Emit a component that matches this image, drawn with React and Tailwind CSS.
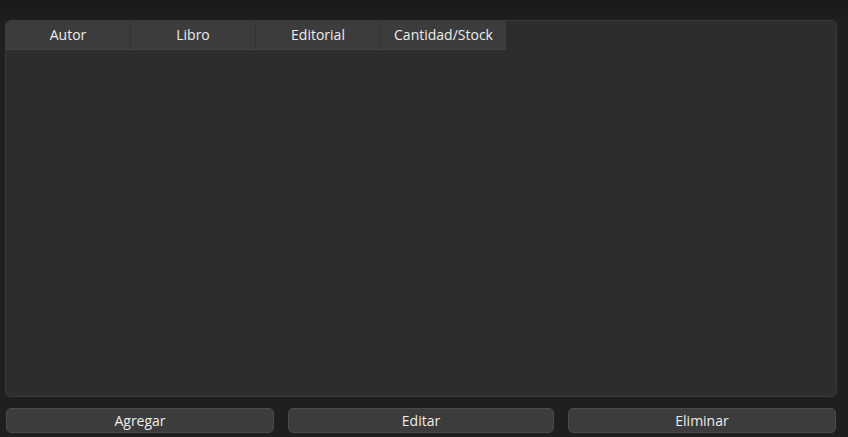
import React from 'react';

const columns = ['Autor', 'Libro', 'Editorial', 'Cantidad/Stock'];
const actions = [
  { label: 'Agregar', w: 'w-[268px]' },
  { label: 'Editar', w: 'w-[266px]' },
  { label: 'Eliminar', w: 'w-[268px]' },
];

export default function App() {
  return (
    <div
      className="h-[437px] w-[848px] flex flex-col bg-[#1f1f1f] text-[14px] text-[#ededed]"
      style={{ fontFamily: '"Open Sans", "Noto Sans", sans-serif' }}
    >
      {/* top strip */}
      <div className="h-[20px] bg-gradient-to-b from-[#18191a] to-[#1f1f1f]" />

      {/* table area */}
      <div className="ml-[5px] mr-[11px] h-[377px] rounded-[6px] border border-[#3a3a3a] bg-[#2d2d2d] overflow-hidden">
        <div className="flex h-[29px] border-b border-[#444444] w-fit">
          {columns.map((c, i) => (
            <div
              key={c}
              className={`w-[125px] flex items-center justify-center bg-[#3c3c3c] leading-none ${
                i < columns.length - 1 ? 'border-r border-[#333333]' : ''
              }`}
            >
              {c}
            </div>
          ))}
        </div>
      </div>

      {/* buttons */}
      <div className="mt-[11px] ml-[6px] flex gap-[14px]">
        {actions.map((a) => (
          <button
            key={a.label}
            className={`${a.w} h-[25px] rounded-[5px] border border-[#4a4a4a] bg-[#3c3c3c] text-[#ededed] leading-none flex items-center justify-center`}
          >
            {a.label}
          </button>
        ))}
      </div>
    </div>
  );
}
